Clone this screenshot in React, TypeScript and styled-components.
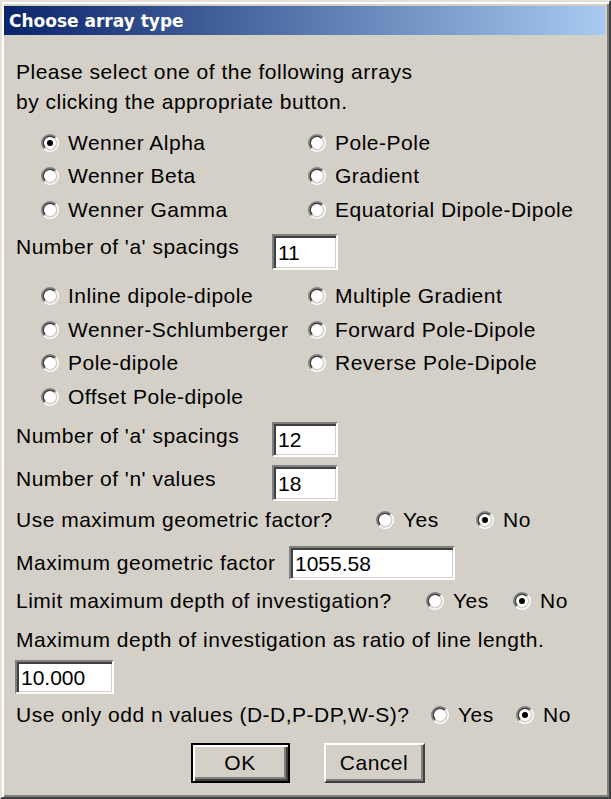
import React from 'react';
import styled, { createGlobalStyle } from 'styled-components';

// Choose array type dialog (classic Windows look)

const GlobalStyle = createGlobalStyle`
    html, body {
        margin: 0;
        padding: 0;
        background: #d4d0c8;
    }
    body {
        font-family: "Liberation Sans", Arial, sans-serif;
        color: #000;
    }
`;

function Radio(props: { checked?: boolean }) {
    const { checked } = props;
    return (
        <svg width="18" height="18" viewBox="0 0 18 18">
            <circle cx="9" cy="9" r="6.2" fill="#fff" />
            <path d="M3.166 14.834 A8.25 8.25 0 0 1 14.834 3.166" fill="none" stroke="#808080" strokeWidth="1.5" />
            <path d="M4.227 13.773 A6.75 6.75 0 0 1 13.773 4.227" fill="none" stroke="#404040" strokeWidth="1.5" />
            <path d="M14.834 3.166 A8.25 8.25 0 0 1 3.166 14.834" fill="none" stroke="#ffffff" strokeWidth="1.5" />
            <path d="M13.773 4.227 A6.75 6.75 0 0 1 4.227 13.773" fill="none" stroke="#d4d0c8" strokeWidth="1.5" />
            {checked && <circle cx="9" cy="9" r="3" fill="#000" />}
        </svg>
    );
}

function Option(props: { label: string; checked?: boolean; width?: number }) {
    const { label, checked, width } = props;
    return (
        <OptionLabel $w={width}>
            <Radio checked={checked} />
            <span>{label}</span>
        </OptionLabel>
    );
}

function App() {
    return (
        <>
            <GlobalStyle />
            <Window>
                <TitleBar>Choose array type</TitleBar>
                <Body>
                    <TextLine $mt={22}>Please select one of the following arrays</TextLine>
                    <TextLine>by clicking the appropriate button.</TextLine>

                    <RadioGrid $mt={9}>
                        <Option label="Wenner Alpha" checked />
                        <Option label="Pole-Pole" />
                        <Option label="Wenner Beta" />
                        <Option label="Gradient" />
                        <Option label="Wenner Gamma" />
                        <Option label="Equatorial Dipole-Dipole" />
                    </RadioGrid>

                    <FieldRow $h={36} $mt={7}>
                        <FieldLabel $w={256} $lift={10}>Number of 'a' spacings</FieldLabel>
                        <TextBox $w={66} defaultValue="11" />
                    </FieldRow>

                    <RadioGrid $mt={10}>
                        <Option label="Inline dipole-dipole" />
                        <Option label="Multiple Gradient" />
                        <Option label="Wenner-Schlumberger" />
                        <Option label="Forward Pole-Dipole" />
                        <Option label="Pole-dipole" />
                        <Option label="Reverse Pole-Dipole" />
                        <Option label="Offset Pole-dipole" />
                    </RadioGrid>

                    <FieldRow $h={35} $mt={8}>
                        <FieldLabel $w={256} $lift={7}>Number of 'a' spacings</FieldLabel>
                        <TextBox $w={66} defaultValue="12" />
                    </FieldRow>
                    <FieldRow $h={36} $mt={8}>
                        <FieldLabel $w={256} $lift={8}>Number of 'n' values</FieldLabel>
                        <TextBox $w={66} defaultValue="18" />
                    </FieldRow>

                    <FieldRow $h={34} $mt={2}>
                        <FieldLabel $w={360}>Use maximum geometric factor?</FieldLabel>
                        <Option label="Yes" width={100} />
                        <Option label="No" checked />
                    </FieldRow>

                    <FieldRow $h={34} $mt={9}>
                        <FieldLabel $w={273}>Maximum geometric factor</FieldLabel>
                        <TextBox $w={166} defaultValue="1055.58" />
                    </FieldRow>

                    <FieldRow $h={34} $mt={4}>
                        <FieldLabel $w={410}>Limit maximum depth of investigation?</FieldLabel>
                        <Option label="Yes" width={87} />
                        <Option label="No" checked />
                    </FieldRow>

                    <TextLine $mt={7}>Maximum depth of investigation as ratio of line length.</TextLine>
                    <FieldRow $h={34} $mt={5} $indent={-1}>
                        <TextBox $w={99} defaultValue="10.000" />
                    </FieldRow>

                    <FieldRow $h={34} $mt={4}>
                        <FieldLabel $w={415}>Use only odd n values (D-D,P-DP,W-S)?</FieldLabel>
                        <Option label="Yes" width={85} />
                        <Option label="No" checked />
                    </FieldRow>

                    <ButtonRow>
                        <DefaultButton>OK</DefaultButton>
                        <Button>Cancel</Button>
                    </ButtonRow>
                </Body>
            </Window>
        </>
    );
}

const Window = styled.div`
    width: 611px;
    height: 799px;
    box-sizing: border-box;
    background: #d4d0c8;
    border: 2px solid;
    border-color: #e4e1dc #404040 #404040 #e4e1dc;
    padding: 2px;
    box-shadow: inset 2px 2px 0 #ffffff, inset -2px -2px 0 #808080;
    display: flex;
    flex-direction: column;
`;

const TitleBar = styled.div`
    height: 29px;
    margin: 2px 2px 0 0;
    padding-left: 5px;
    display: flex;
    align-items: center;
    background: linear-gradient(to right, #0a246a, #a6caf0);
    color: #fff;
    font-family: "DejaVu Sans", Verdana, sans-serif;
    font-weight: bold;
    font-size: 17px;
`;

const Body = styled.div`
    padding-left: 12px;
    display: flex;
    flex-direction: column;
    font-size: 21px;
    letter-spacing: 0.5px;
`;

const TextLine = styled.div<{ $mt?: number }>`
    height: 30px;
    margin-top: ${(p) => p.$mt || 0}px;
    display: flex;
    align-items: center;
    white-space: nowrap;
`;

const RadioGrid = styled.div<{ $mt?: number }>`
    margin-top: ${(p) => p.$mt || 0}px;
    padding-left: 25px;
    display: grid;
    grid-template-columns: 267px auto;
    grid-auto-rows: 33.5px;
`;

const OptionLabel = styled.label<{ $w?: number }>`
    display: flex;
    align-items: center;
    gap: 9px;
    white-space: nowrap;
    width: ${(p) => (p.$w ? `${p.$w}px` : 'auto')};
    & svg {
        flex-shrink: 0;
    }
`;

const FieldRow = styled.div<{ $h: number; $mt?: number; $indent?: number }>`
    height: ${(p) => p.$h}px;
    margin-top: ${(p) => p.$mt || 0}px;
    margin-left: ${(p) => p.$indent || 0}px;
    display: flex;
    align-items: center;
`;

const FieldLabel = styled.div<{ $w: number; $lift?: number }>`
    width: ${(p) => p.$w}px;
    flex-shrink: 0;
    white-space: nowrap;
    padding-bottom: ${(p) => p.$lift || 0}px;
`;

const TextBox = styled.input<{ $w: number }>`
    width: ${(p) => p.$w}px;
    height: 100%;
    box-sizing: border-box;
    margin: 0;
    padding: 2px 0 0 4px;
    border: 2px solid;
    border-color: #808080 #ffffff #ffffff #808080;
    box-shadow: inset 2px 2px 0 #404040, inset -1px -1px 0 #d4d0c8;
    background: #fff;
    font-family: "Liberation Sans", Arial, sans-serif;
    font-size: 21px;
    color: #000;
    outline: none;
`;

const ButtonRow = styled.div`
    margin-top: 11px;
    margin-left: -8px;
    display: flex;
    justify-content: center;
    gap: 34px;
`;

const Button = styled.button`
    width: 101px;
    height: 40px;
    box-sizing: border-box;
    margin: 0;
    padding: 0;
    background: #d4d0c8;
    border: 2px solid;
    border-color: #ffffff #404040 #404040 #ffffff;
    box-shadow: inset -2px -2px 0 #808080;
    font-family: "Liberation Sans", Arial, sans-serif;
    font-size: 21px;
    letter-spacing: 0.5px;
    color: #000;
`;

const DefaultButton = styled(Button)`
    width: 99px;
    border: 2px solid #000;
    box-shadow: inset 2px 2px 0 #ffffff, inset -2px -2px 0 #404040, inset -4px -4px 0 #808080;
`;

export default App;
